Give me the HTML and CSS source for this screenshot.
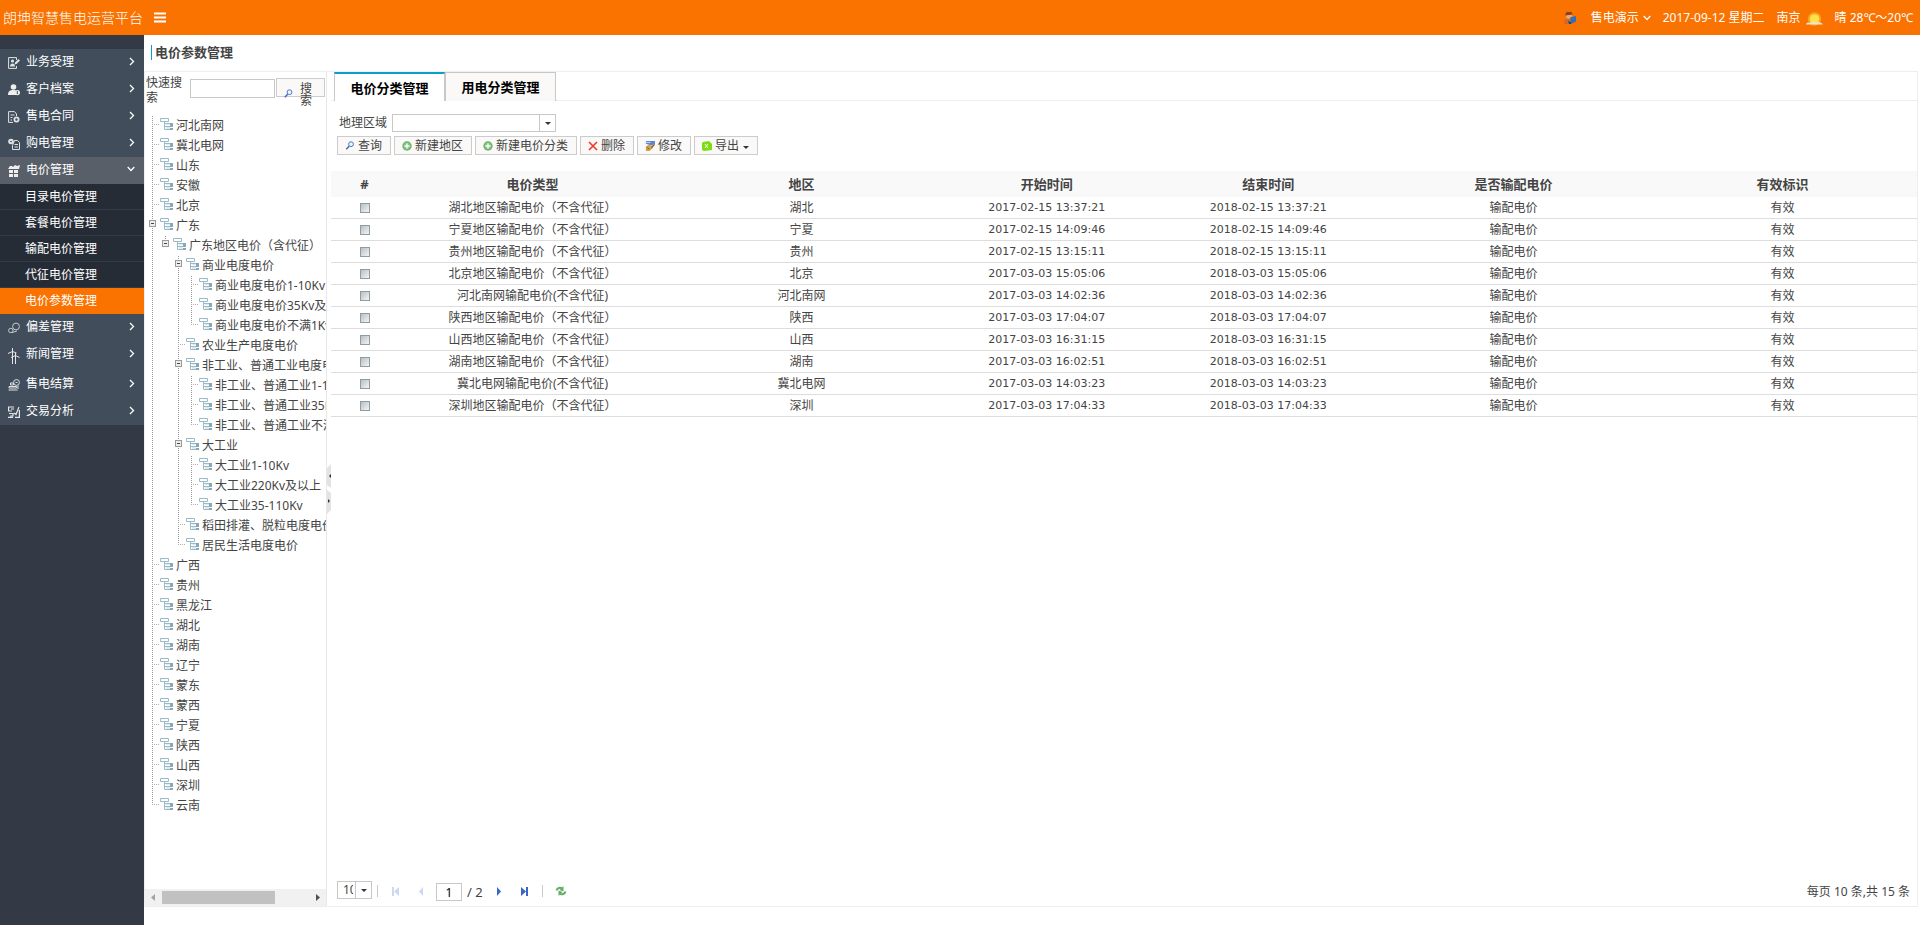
FILE: index.html
```html
<!DOCTYPE html>
<html lang="zh-CN">
<head>
<meta charset="utf-8">
<title>电价参数管理</title>
<link rel="stylesheet" href="styles.css">
</head>
<body>
<svg class="defs" aria-hidden="true">
  <symbol id="i-node" viewBox="0 0 13 13">
    <path d="M6 5h6v2H6zM6 9h4v2H6z" fill="#dfebef"/>
    <path d="M.5.500h8v3h-8zM4.500 3.500v8h6M4.500 5.500h6M4.500 8.500h6" fill="none" stroke="#9bbac7"/>
    <path d="M10 5h3v4h-3zM10 10h3v2h-3z" fill="#85a9b8"/>
  </symbol>
  <symbol id="i-search" viewBox="0 0 9 9">
    <circle cx="5.500" cy="3.200" r="2.400" fill="#eef5ff" stroke="#4a78c0"/>
    <path d="M3.600 5.200L.8 8.200" stroke="#3f6cb4" stroke-width="1.500"/>
  </symbol>
  <symbol id="i-add" viewBox="0 0 10 10">
    <circle cx="5" cy="5" r="4.700" fill="#6db36a"/>
    <circle cx="5" cy="5" r="3.400" fill="#86c483"/>
    <path d="M5 2.500v5M2.500 5h5" stroke="#fff" stroke-width="1.400"/>
  </symbol>
  <symbol id="i-right" viewBox="0 0 6 9"><path d="M1 1l3.500 3.500L1 8" fill="none" stroke="#fff" stroke-width="1.300"/></symbol>
  <symbol id="i-down" viewBox="0 0 8 6"><path d="M.7 1L4 4.500 7.300 1" fill="none" stroke="#fff" stroke-width="1.300"/></symbol>
</svg>

<header class="topbar">
  <h1 class="brand">朗坤智慧售电运营平台</h1>
  <button class="plain burger" aria-label="菜单"><svg width="12" height="11"><path d="M0 1.500h12M0 5.500h12M0 9.500h12" stroke="#fff" stroke-width="2"/></svg></button>
  <div class="status">
    <svg class="avatar" width="13" height="13" viewBox="0 0 13 13">
      <circle cx="5" cy="4" r="3" fill="#eda870"/><path d="M1.500 3.500a3.500 3.500 0 0 1 7-1L5 3z" fill="#8a3f1e"/>
      <path d="M0 11c0-4 3-5 6-4l1 5H1z" fill="#c96a35"/><path d="M6 5.500l6-1.500v5.500L7 12z" fill="#2f6fb5"/><path d="M4 9l3 1v2H5z" fill="#27466e"/>
    </svg>
    <button class="plain user">售电演示 <svg width="8" height="6"><use href="#i-down"/></svg></button>
    <span class="date">2017-09-12 星期二</span>
    <span class="city">南京</span>
    <svg class="weather" width="17" height="15" viewBox="0 0 17 15">
      <circle cx="8.500" cy="8" r="6.800" fill="#fdb62c" opacity=".7"/><circle cx="8.500" cy="8" r="4.800" fill="#ffe24a"/>
      <path d="M0 13.500c0-2 2-2 4-1.500 1-2 4-2 6-.5 2-1 6 0 7 2z" fill="#f0e3c4"/>
    </svg>
    <span>晴 28℃～20℃</span>
  </div>
</header>

<div class="shell">
  <nav class="sidebar">
    <ul class="menu">
      <li><a class="item" href="#"><svg class="mi" viewBox="0 0 12 12"><path d="M8.500 3V.6H.6v10.800h7.900V9" fill="none" stroke="#dfe2e5"/><circle cx="4.500" cy="4" r="1.600" fill="#dfe2e5"/><path d="M2 9.500c0-4 5-4 5 0zM6.500 7.500l.5-2L10.500 2 12 3.500 8.500 7z" fill="#dfe2e5"/></svg>业务受理<svg class="chev" width="6" height="9"><use href="#i-right"/></svg></a></li>
      <li><a class="item" href="#"><svg class="mi" viewBox="0 0 12 12"><circle cx="5.500" cy="3" r="2.800" fill="#eee"/><path d="M0 11c0-4 2-5 5.500-5C7 6 8 6.500 8 7v4z" fill="#eee"/><circle cx="9.300" cy="8.600" r="2.700" fill="#eee"/><path d="M9.300 7v3.200" stroke="#414d5b"/></svg>客户档案<svg class="chev" width="6" height="9"><use href="#i-right"/></svg></a></li>
      <li><a class="item" href="#"><svg class="mi" viewBox="0 0 12 12"><path d="M8.500 5V3L6.500.6H.6v10.800H5M2.500 4h4M2.500 6.500h2M2.500 9H4" fill="none" stroke="#dfe2e5"/><circle cx="8.500" cy="8.500" r="2.100" fill="none" stroke="#dfe2e5" stroke-width="1.800"/></svg>售电合同<svg class="chev" width="6" height="9"><use href="#i-right"/></svg></a></li>
      <li><a class="item" href="#"><svg class="mi" viewBox="0 0 12 12"><circle cx="3" cy="3.500" r="2.800" fill="#dfe2e5"/><circle cx="3" cy="3.500" r=".8" fill="#414d5b"/><path d="M6.500 2.500h3l2 2v7H4.500v-4zM6.500 6.500h3.500M6.500 9H10" fill="none" stroke="#dfe2e5"/></svg>购电管理<svg class="chev" width="6" height="9"><use href="#i-right"/></svg></a></li>
      <li>
        <a class="item open" href="#"><svg class="mi" viewBox="0 0 12 12"><path d="M0 4l2-3h2l1 1 2-2 2 1 3-1-1 4zM1 5h4v3H1zM6 5h4v3H6zM1 9h4v3H1zM6 9h4v3H6z" fill="#eee"/></svg>电价管理<svg class="chev" width="8" height="6"><use href="#i-down"/></svg></a>
        <ul class="submenu">
          <li><a href="#">目录电价管理</a></li>
          <li><a href="#">套餐电价管理</a></li>
          <li><a href="#">输配电价管理</a></li>
          <li><a href="#">代征电价管理</a></li>
          <li><a class="current" href="#">电价参数管理</a></li>
        </ul>
      </li>
      <li><a class="item" href="#"><svg class="mi" viewBox="0 0 12 12"><circle cx="8" cy="4.500" r="3.400" fill="none" stroke="#c5cad0"/><circle cx="2.800" cy="8.500" r="2.200" fill="none" stroke="#c5cad0"/><path d="M4 10.500l5-1.500" stroke="#c5cad0"/></svg>偏差管理<svg class="chev" width="6" height="9"><use href="#i-right"/></svg></a></li>
      <li><a class="item tall" href="#"><svg class="mi tower" viewBox="0 0 12 16"><path d="M4.500 0v16M7.500 5v11M0 5.500l4.500-2 4 1.500M3 9.500l4.500-2 4 2M7.500 6v3" fill="none" stroke="#e4e6e9"/></svg>新闻管理<svg class="chev" width="6" height="9"><use href="#i-right"/></svg></a></li>
      <li><a class="item" href="#"><svg class="mi" viewBox="0 0 12 12"><circle cx="8.500" cy="3.500" r="2.900" fill="none" stroke="#dfe2e5"/><path d="M2.500 4h3v2h-3zM1 7.500h7.500v1.500H1zM.5 11h9M10 6.500V10M7.500 3.500h2" fill="none" stroke="#dfe2e5"/></svg>售电结算<svg class="chev" width="6" height="9"><use href="#i-right"/></svg></a></li>
      <li><a class="item" href="#"><svg class="mi" viewBox="0 0 12 12"><path d="M6 1H.6v4H4M1 7.500h4V10H2M0 11.400h5M11.400 4v7.400H7M6 7l2 1.500L11 1M3 3h3" fill="none" stroke="#e4e6e9" stroke-width="1.200"/></svg>交易分析<svg class="chev" width="6" height="9"><use href="#i-right"/></svg></a></li>
    </ul>
  </nav>

  <main class="content">
    <h2 class="title">电价参数管理</h2>
    <div class="workspace">
      <section class="treepane">
        <form class="quick">
          <label for="kw">快速搜索</label>
          <input id="kw" type="text">
          <button class="btn find" type="button"><svg width="9" height="9"><use href="#i-search"/></svg><span>搜索</span></button>
        </form>
        <ul class="tree">
          <li><div class="node"><svg><use href="#i-node"/></svg>河北南网</div></li>
          <li><div class="node"><svg><use href="#i-node"/></svg>冀北电网</div></li>
          <li><div class="node"><svg><use href="#i-node"/></svg>山东</div></li>
          <li><div class="node"><svg><use href="#i-node"/></svg>安徽</div></li>
          <li><div class="node"><svg><use href="#i-node"/></svg>北京</div></li>
          <li><div class="node parent"><button class="toggle" aria-label="收起"></button><svg><use href="#i-node"/></svg>广东</div>
            <ul>
              <li><div class="node parent"><button class="toggle" aria-label="收起"></button><svg><use href="#i-node"/></svg>广东地区电价（含代征）</div>
                <ul>
                  <li><div class="node parent"><button class="toggle" aria-label="收起"></button><svg><use href="#i-node"/></svg>商业电度电价</div>
                    <ul>
                      <li><div class="node"><svg><use href="#i-node"/></svg>商业电度电价1-10Kv</div></li>
                      <li><div class="node"><svg><use href="#i-node"/></svg>商业电度电价35Kv及以上</div></li>
                      <li><div class="node"><svg><use href="#i-node"/></svg>商业电度电价不满1Kv</div></li>
                    </ul>
                  </li>
                  <li><div class="node"><svg><use href="#i-node"/></svg>农业生产电度电价</div></li>
                  <li><div class="node parent"><button class="toggle" aria-label="收起"></button><svg><use href="#i-node"/></svg>非工业、普通工业电度电价</div>
                    <ul>
                      <li><div class="node"><svg><use href="#i-node"/></svg>非工业、普通工业1-10Kv</div></li>
                      <li><div class="node"><svg><use href="#i-node"/></svg>非工业、普通工业35Kv及以上</div></li>
                      <li><div class="node"><svg><use href="#i-node"/></svg>非工业、普通工业不满1Kv</div></li>
                    </ul>
                  </li>
                  <li><div class="node parent"><button class="toggle" aria-label="收起"></button><svg><use href="#i-node"/></svg>大工业</div>
                    <ul>
                      <li><div class="node"><svg><use href="#i-node"/></svg>大工业1-10Kv</div></li>
                      <li><div class="node"><svg><use href="#i-node"/></svg>大工业220Kv及以上</div></li>
                      <li><div class="node"><svg><use href="#i-node"/></svg>大工业35-110Kv</div></li>
                    </ul>
                  </li>
                  <li><div class="node"><svg><use href="#i-node"/></svg>稻田排灌、脱粒电度电价</div></li>
                  <li><div class="node"><svg><use href="#i-node"/></svg>居民生活电度电价</div></li>
                </ul>
              </li>
            </ul>
          </li>
          <li><div class="node"><svg><use href="#i-node"/></svg>广西</div></li>
          <li><div class="node"><svg><use href="#i-node"/></svg>贵州</div></li>
          <li><div class="node"><svg><use href="#i-node"/></svg>黑龙江</div></li>
          <li><div class="node"><svg><use href="#i-node"/></svg>湖北</div></li>
          <li><div class="node"><svg><use href="#i-node"/></svg>湖南</div></li>
          <li><div class="node"><svg><use href="#i-node"/></svg>辽宁</div></li>
          <li><div class="node"><svg><use href="#i-node"/></svg>蒙东</div></li>
          <li><div class="node"><svg><use href="#i-node"/></svg>蒙西</div></li>
          <li><div class="node"><svg><use href="#i-node"/></svg>宁夏</div></li>
          <li><div class="node"><svg><use href="#i-node"/></svg>陕西</div></li>
          <li><div class="node"><svg><use href="#i-node"/></svg>山西</div></li>
          <li><div class="node"><svg><use href="#i-node"/></svg>深圳</div></li>
          <li><div class="node"><svg><use href="#i-node"/></svg>云南</div></li>
        </ul>
        <div class="hscroll">
          <svg width="4" height="7"><path d="M4 0v7L0 3.500z" fill="#a3a3a3"/></svg>
          <div class="track"><div class="thumb"></div></div>
          <svg width="4" height="7"><path d="M0 0v7l4-3.500z" fill="#505050"/></svg>
        </div>
      </section>

      <div class="splitter">
        <svg width="4" height="50" viewBox="0 0 4 50"><path d="M4 0v24L0 21V4zM0 26l4 3v17l-4 4z" fill="#e3e3e3"/><path d="M4 10v4l-2-2zM1 35l2 2-2 2z" fill="#333"/></svg>
      </div>

      <section class="gridpane">
        <div class="tabs">
          <button class="tab active">电价分类管理</button><button class="tab">用电分类管理</button>
        </div>
        <div class="filter">
          <label for="area">地理区域</label>
          <span class="combo wide"><select id="area"><option></option></select><i></i></span>
        </div>
        <div class="toolbar">
          <button class="btn"><svg width="10" height="9"><use href="#i-search"/></svg>查询</button>
          <button class="btn"><svg width="10" height="10"><use href="#i-add"/></svg>新建地区</button>
          <button class="btn"><svg width="10" height="10"><use href="#i-add"/></svg>新建电价分类</button>
          <button class="btn"><svg width="10" height="10"><path d="M1 1l8 8M9 1L1 9" stroke="#ee3a24" stroke-width="1.600"/></svg>删除</button>
          <button class="btn"><svg width="10" height="10" viewBox="0 0 11 11"><path d="M1 0h10v3L7 5 1 3z" fill="#5c86cf"/><path d="M1 1h5v1H1z" fill="#cfe0fa"/><path d="M1 6l3-2 3 1 1 3-3 3H1z" fill="#d2a34a"/><path d="M7 6l3-3 1 1-4 5z" fill="#8a6a34"/><path d="M2 7l3 2" stroke="#8c6015"/></svg>修改</button>
          <button class="btn"><svg width="10" height="10" viewBox="0 0 10 10"><path d="M1 1l6-1 3 3v6l-8 1-2-1V2z" fill="#7ddc14"/><path d="M3 3l3 4M6 3L3 7" stroke="#f3ffe0"/></svg>导出<b class="caret"></b></button>
        </div>

        <table class="grid">
          <colgroup><col class="c1"><col class="c2"><col class="c2"><col class="c3"><col class="c3"><col class="c2"><col class="c2"></colgroup>
          <thead><tr><th>#</th><th>电价类型</th><th>地区</th><th>开始时间</th><th>结束时间</th><th>是否输配电价</th><th>有效标识</th></tr></thead>
          <tbody>
            <tr><td><input type="checkbox" aria-label="湖北"></td><td>湖北地区输配电价（不含代征）</td><td>湖北</td><td class="t">2017-02-15 13:37:21</td><td class="t">2018-02-15 13:37:21</td><td>输配电价</td><td>有效</td></tr>
            <tr><td><input type="checkbox" aria-label="宁夏"></td><td>宁夏地区输配电价（不含代征）</td><td>宁夏</td><td class="t">2017-02-15 14:09:46</td><td class="t">2018-02-15 14:09:46</td><td>输配电价</td><td>有效</td></tr>
            <tr><td><input type="checkbox" aria-label="贵州"></td><td>贵州地区输配电价（不含代征）</td><td>贵州</td><td class="t">2017-02-15 13:15:11</td><td class="t">2018-02-15 13:15:11</td><td>输配电价</td><td>有效</td></tr>
            <tr><td><input type="checkbox" aria-label="北京"></td><td>北京地区输配电价（不含代征）</td><td>北京</td><td class="t">2017-03-03 15:05:06</td><td class="t">2018-03-03 15:05:06</td><td>输配电价</td><td>有效</td></tr>
            <tr><td><input type="checkbox" aria-label="河北南网"></td><td>河北南网输配电价(不含代征)</td><td>河北南网</td><td class="t">2017-03-03 14:02:36</td><td class="t">2018-03-03 14:02:36</td><td>输配电价</td><td>有效</td></tr>
            <tr><td><input type="checkbox" aria-label="陕西"></td><td>陕西地区输配电价（不含代征）</td><td>陕西</td><td class="t">2017-03-03 17:04:07</td><td class="t">2018-03-03 17:04:07</td><td>输配电价</td><td>有效</td></tr>
            <tr><td><input type="checkbox" aria-label="山西"></td><td>山西地区输配电价（不含代征）</td><td>山西</td><td class="t">2017-03-03 16:31:15</td><td class="t">2018-03-03 16:31:15</td><td>输配电价</td><td>有效</td></tr>
            <tr><td><input type="checkbox" aria-label="湖南"></td><td>湖南地区输配电价（不含代征）</td><td>湖南</td><td class="t">2017-03-03 16:02:51</td><td class="t">2018-03-03 16:02:51</td><td>输配电价</td><td>有效</td></tr>
            <tr><td><input type="checkbox" aria-label="冀北电网"></td><td>冀北电网输配电价(不含代征)</td><td>冀北电网</td><td class="t">2017-03-03 14:03:23</td><td class="t">2018-03-03 14:03:23</td><td>输配电价</td><td>有效</td></tr>
            <tr><td><input type="checkbox" aria-label="深圳"></td><td>深圳地区输配电价（不含代征）</td><td>深圳</td><td class="t">2017-03-03 17:04:33</td><td class="t">2018-03-03 17:04:33</td><td>输配电价</td><td>有效</td></tr>
          </tbody>
        </table>

        <footer class="pager">
          <span class="combo small"><select aria-label="每页条数"><option>10</option></select><i></i></span>
          <span class="sep"></span>
          <button class="plain pg" aria-label="首页"><svg width="8" height="9"><path d="M0 0h2v9H0zM7 0v9L2 4.500z" fill="#ccd9f2"/></svg></button>
          <button class="plain pg" aria-label="上一页"><svg width="8" height="9"><path d="M6 0v9L2 4.500z" fill="#ccd9f2"/></svg></button>
          <input class="page" type="text" value="1" aria-label="页码">
          <span class="total">/ 2</span>
          <button class="plain pg" aria-label="下一页"><svg width="8" height="9"><path d="M2 0v9l4-4.500z" fill="#3a66cc"/></svg></button>
          <button class="plain pg" aria-label="末页"><svg width="8" height="9"><path d="M6 0h2v9H6zM1 0v9l5-4.500z" fill="#3a66cc"/></svg></button>
          <span class="sep"></span>
          <button class="plain pg" aria-label="刷新"><svg width="12" height="12" viewBox="0 0 12 12"><path d="M1.500 5.500C2 3 5 2 7.500 3.500M10.500 6.500C10 9 7 10 4.500 8.500" fill="none" stroke="#67ad69" stroke-width="2"/><path d="M8.500 1v5.500L4.500 5zM3.500 11V5.500l4 1.500z" fill="#67ad69"/></svg></button>
          <span class="summary">每页 10 条,共 15 条</span>
        </footer>
      </section>
    </div>
  </main>
</div>
</body>
</html>
```
FILE: styles.css
```css
* { box-sizing: border-box; }
body {
  margin: 0;
  height: 100vh;
  display: flex;
  flex-direction: column;
  background: #fff;
  color: #444;
  font: 12px/14px "Noto Sans", "Noto Sans CJK SC", sans-serif;
}
ul { list-style: none; margin: 0; padding: 0; }
button, input, select { font: inherit; color: inherit; }
a { color: inherit; text-decoration: none; }
svg { flex: none; display: block; }
.defs { width: 0; height: 0; position: absolute; }
.plain { border: 0; padding: 0; background: none; }

/* top bar */
.topbar {
  flex: none;
  height: 35px;
  display: flex;
  align-items: center;
  background: #fa7200;
  color: #fff;
  padding: 0 7px 0 3px;
}
.brand { margin: 0; font-size: 14px; font-weight: 300; line-height: 20px; }
.burger { margin-left: 11px; }
.status { margin-left: auto; display: flex; align-items: center; padding-top: 1px; line-height: 20px; }
.user { display: flex; align-items: center; gap: 4px; margin: 0 12px 0 14px; }
.city { margin: 0 5px 0 12px; }
.weather { margin-right: 12px; }

/* side menu */
.shell { flex: 1; min-height: 0; display: flex; }
.sidebar { flex: none; width: 144px; padding-top: 14px; background: #333a45; color: #fff; }
.menu { background: #414d5b; }
.item { display: flex; align-items: center; height: 27px; padding: 0 9px 1px 8px; }
.item.tall { height: 30px; padding-bottom: 4px; }
.item.open { background: #595f69; }
.mi { width: 12px; height: 12px; margin: 1px 6px 0 0; }
.mi.tower { height: 16px; margin-top: 4px; }
.chev { margin: 0 0 2px auto; }
.submenu { background: #262c36; }
.submenu a { display: block; height: 26px; padding: 6px 0 0 25px; border-bottom: 1px solid #343b46; }
.submenu .current { background: #fa7200; border-color: #fa7200; }

/* page body */
.content { flex: 1; min-width: 0; display: flex; flex-direction: column; padding: 0 2px 18px 0; }
.title {
  margin: 10px 0 11px 7px;
  padding-left: 3px;
  border-left: 1px solid #0a9ed0;
  font-size: 13px;
  line-height: 15px;
}
.workspace { flex: 1; min-height: 0; display: flex; border: 1px solid #eee; }

/* tree */
.treepane { flex: none; width: 182px; display: flex; flex-direction: column; border-right: 1px solid #e8e8e8; }
.quick { display: flex; align-items: flex-start; height: 44px; padding: 3px 1px 0; }
.quick label { width: 38px; line-height: 15px; }
.quick input { width: 85px; height: 19px; margin: 4px 1px 0 6px; border: 1px solid #c8c8c8; }
.btn {
  display: flex;
  align-items: center;
  height: 19px;
  padding: 0 8px 0 7px;
  gap: 3px;
  border: 1px solid #ccc;
  background: #faf9f8;
  white-space: nowrap;
}
.find { flex: 1; margin-top: 3px; padding-top: 4px; gap: 7px; align-items: flex-start; line-height: 12px; white-space: normal; }
.find svg { margin-top: 6px; }
.find span { width: 12px; }
.tree { flex: 1; min-height: 0; overflow: hidden; padding-left: 3px; white-space: nowrap; }
.tree ul { margin-left: 13px; }
.tree li { background: repeating-linear-gradient(#999 0 1px, transparent 1px 2px) 4px 0 / 1px 100% no-repeat; }
.tree li:last-child { background-size: 1px 10px; }
.node { display: flex; align-items: center; height: 20px; }
.node::before { content: ""; flex: none; width: 7px; margin: 0 1px 4px 4px; border-top: 1px dotted #b0b0b0; }
.node svg { width: 13px; height: 13px; margin: 0 3px 3px 0; }
.node.parent::before { display: none; }
.toggle {
  flex: none;
  width: 7px;
  height: 7px;
  margin: 0 4px 5px 1px;
  padding: 0;
  border: 1px solid #9a9a9a;
  background: linear-gradient(#444, #444) center / 3px 1px no-repeat #eee;
}
.hscroll { flex: none; display: flex; align-items: center; height: 17px; padding: 0 6px; background: #f1f1f1; }
.track { flex: 1; padding: 0 7px; }
.thumb { width: 77%; height: 13px; background: #c1c1c1; }
.splitter { flex: none; width: 4px; display: flex; align-items: center; }

/* grid side */
.gridpane { flex: 1; min-width: 0; display: flex; flex-direction: column; }
.tabs { display: flex; height: 29px; padding-left: 3px; border-bottom: 1px solid #eee; }
.tab {
  width: 111px;
  height: 29px;
  padding: 0;
  border: 1px solid #c8c8c8;
  border-bottom: 0;
  background: #faf9f8;
  color: #000;
  font-size: 13px;
  font-weight: 700;
}
.tab.active { border-top: 2px solid #0a9ec8; background: #fff; }
.filter { display: flex; align-items: center; gap: 5px; padding: 13px 0 0 8px; }
.combo { display: flex; height: 18px; border: 1px solid #c8c8c8; }
.combo select { flex: 1; min-width: 0; appearance: none; border: 0; padding: 0 0 0 5px; background: #fff; }
.combo i { width: 16px; display: flex; align-items: center; justify-content: center; border-left: 1px solid #c8c8c8; }
.combo i::after, .caret { content: ""; border: 3px solid transparent; border-top-color: #334; border-bottom: 0; }
.wide { width: 164px; }
.small { width: 35px; }
.small select { padding-right: 2px; }
.toolbar { display: flex; gap: 3px; padding: 4px 0 16px 6px; }
.caret { margin: 3px 0 0 1px; }
.grid { width: 100%; table-layout: fixed; border-collapse: separate; border-spacing: 0; text-align: center; }
.grid th, .grid td { padding: 0; }
.grid th { height: 26px; background: #f9f9f9; font-size: 13px; }
.grid td { height: 22px; border-bottom: 1px solid #ddd; }
.grid .t { font-family: "DejaVu Sans", sans-serif; font-size: 11px; }
.c1 { width: 67px; }
.c2 { width: 17%; }
.c3 { width: 14%; }
.grid input {
  appearance: none;
  display: block;
  width: 10px;
  height: 10px;
  margin: 1px auto 0;
  border: 1px solid #8e9da3;
  background: linear-gradient(135deg, #b9bfc4, #f4f4f4);
}
.pager { display: flex; align-items: center; margin-top: auto; padding: 0 7px 3px 6px; }
.pager .small { margin-bottom: 4px; }
.sep { width: 1px; height: 12px; margin: 0 14px 3px 5px; background: #ccc; }
.pg { margin: 0 9px 2px 0; }
.pg + .pg { margin-left: 8px; }
.pg + .sep { margin-right: 12px; }
.page { width: 26px; height: 18px; margin: 0 5px 0 2px; padding: 0; border: 1px solid #c8c8c8; text-align: center; color: #000; }
.total { font-size: 13px; margin-right: 12px; }
.summary { margin-left: auto; }
```
